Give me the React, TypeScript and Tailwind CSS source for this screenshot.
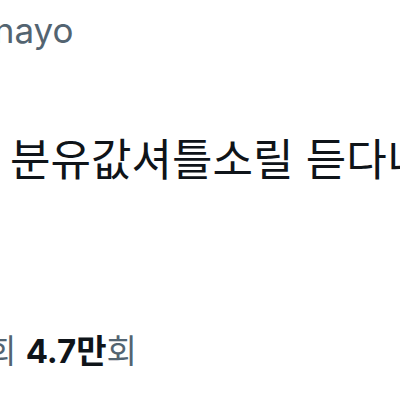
import React from 'react';

const font = { fontFamily: 'Inter, "Noto Sans CJK KR", sans-serif' };

const App: React.FC = () => {
  return (
    <div className="w-[400px] h-[400px] overflow-hidden bg-white" style={font}>
      <div className="flex flex-col">
        {/* handle, clipped on the left */}
        <div className="ml-[-40px] pt-[10px] text-[35px] leading-[40px] text-[#536471] whitespace-nowrap">
          @nayo
        </div>

        {/* tweet body */}
        <div className="mt-[84px] pl-[10px] text-[44px] leading-[52px] text-[#0f1419] whitespace-nowrap">
          분유값셔틀소릴 듣다니
        </div>

        {/* view count */}
        <div className="mt-[145px] ml-[-14px] text-[33px] leading-[40px] text-[#536471] whitespace-nowrap">
          회 <span className="font-bold text-[#0f1419]">4.7만</span>회
        </div>
      </div>
    </div>
  );
};

export default App;
